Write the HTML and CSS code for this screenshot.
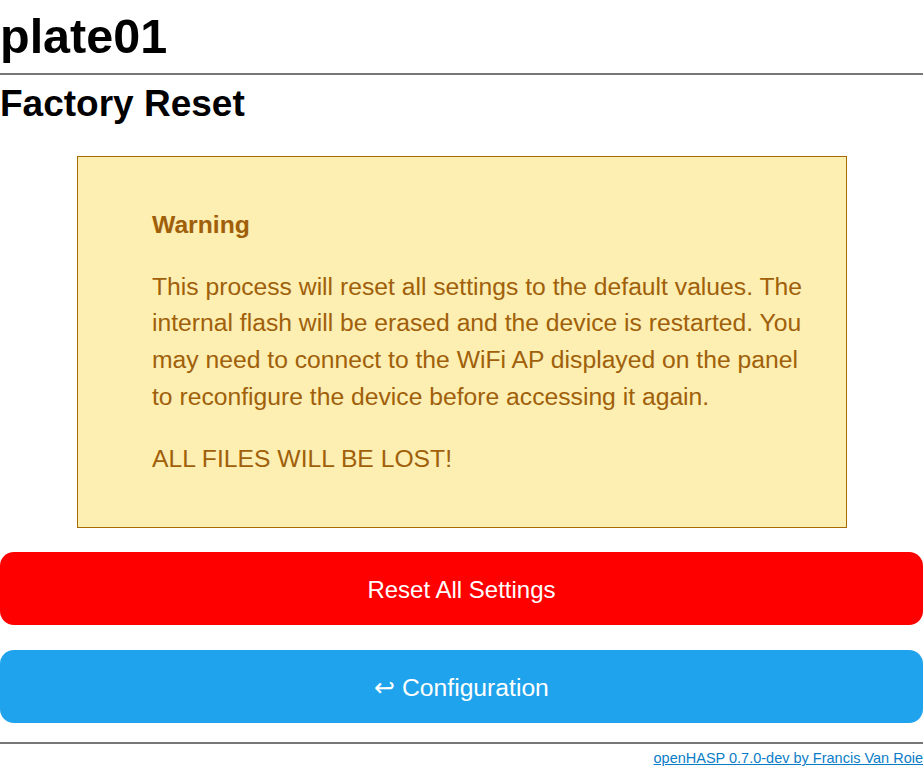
FILE: index.html
```html
<!DOCTYPE html>
<html>
<head>
<meta charset="utf-8">
<link rel="stylesheet" href="styles.css">
</head>
<body>
<h1 class="title">plate01</h1>
<hr class="rule">
<h2 class="subtitle">Factory Reset</h2>
<div class="warn">
  <p class="warn-head">Warning</p>
  <p class="warn-text">This process will reset all settings to the default values. The internal flash will be erased and the device is restarted. You may need to connect to the WiFi AP displayed on the panel to reconfigure the device before accessing it again.</p>
  <p class="warn-text">ALL FILES WILL BE LOST!</p>
</div>
<button class="btn btn-red">Reset All Settings</button>
<button class="btn btn-blue">&#8617; Configuration</button>
<hr class="rule rule-bottom">
<div class="footer"><a class="footer-link" href="#">openHASP 0.7.0-dev by Francis Van Roie</a></div>
</body>
</html>
```
FILE: styles.css
```css
html, body {
  margin: 0;
  padding: 0;
  background: #fff;
  font-family: "Liberation Sans", Arial, sans-serif;
  color: #000;
}
.title {
  font-size: 48.5px;
  line-height: 55px;
  font-weight: bold;
  margin: 9px 0 0 0;
}
.rule {
  border: 0;
  border-top: 2px solid #777;
  margin: 9px 0 0 0;
  height: 0;
}
.subtitle {
  font-size: 37px;
  line-height: 42px;
  font-weight: bold;
  margin: 8px 0 0 0;
}
.warn {
  margin: 31px 0 0 77px;
  width: 663px;
  padding: 24px 31px 50px 74px;
  background: #fdeeb2;
  border: 1px solid #a66a00;
  color: #a0600a;
  font-size: 24.7px;
  line-height: 36.7px;
}
.warn p {
  margin: 0;
}
.warn-head {
  font-weight: bold;
  padding-top: 26px;
}
.warn-text {
  padding-top: 25px;
}
.btn {
  display: block;
  width: 100%;
  height: 73px;
  border: 0;
  border-radius: 14px;
  color: #fff;
  font-family: "Liberation Sans", Arial, sans-serif;
  font-size: 24.7px;
  margin: 25px 0 0 0;
  padding: 3px 0 0 0;
}
.btn-red {
  background: #ff0000;
  font-size: 24px;
  margin-top: 24px;
}
.btn-blue {
  background: #1fa3ec;
  padding-top: 1px;
}
.rule-bottom {
  margin-top: 19px;
}
.footer {
  text-align: right;
  font-size: 14.5px;
  line-height: 16px;
  padding-top: 6px;
  white-space: nowrap;
  overflow: hidden;
}
.footer-link {
  color: #0b7dc7;
}
```
